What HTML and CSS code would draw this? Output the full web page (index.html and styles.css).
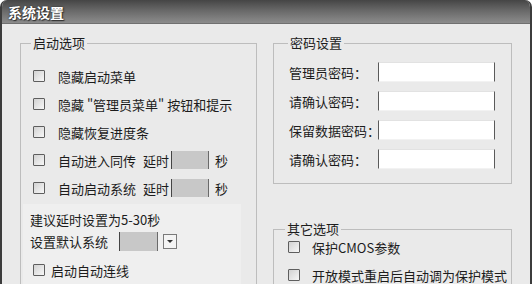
FILE: index.html
```html
<!DOCTYPE html>
<html lang="zh-CN">
<head>
<meta charset="utf-8">
<title>系统设置</title>
<link rel="stylesheet" href="styles.css">
</head>
<body>
<div class="window">
  <div class="titlebar"><span class="title">系统设置</span></div>
  <div class="content">
    <fieldset class="group group-start">
      <legend>启动选项</legend>
      <div class="rows">
        <div class="row"><span class="cb"></span><span>隐藏启动菜单</span></div>
        <div class="row"><span class="cb"></span><span>隐藏 "管理员菜单" 按钮和提示</span></div>
        <div class="row"><span class="cb"></span><span>隐藏恢复进度条</span></div>
        <div class="row"><span class="cb"></span><span>自动进入同传</span><span class="delay">延时</span><span class="field"></span><span class="unit">秒</span></div>
        <div class="row"><span class="cb"></span><span>自动启动系统</span><span class="delay">延时</span><span class="field"></span><span class="unit">秒</span></div>
      </div>
      <div class="panel">
        <div class="hint">建议延时设置为5-30秒</div>
        <div class="select-row"><span>设置默认系统</span><span class="field sel"></span><span class="drop"><span class="tri"></span></span></div>
        <div class="row row-auto"><span class="cb"></span><span>启动自动连线</span></div>
      </div>
    </fieldset>
    <div class="col-right">
      <fieldset class="group group-pass">
        <legend>密码设置</legend>
        <div class="pass-grid">
          <span>管理员密码：</span><span class="input"></span>
          <span>请确认密码：</span><span class="input"></span>
          <span>保留数据密码：</span><span class="input"></span>
          <span>请确认密码：</span><span class="input"></span>
        </div>
      </fieldset>
      <fieldset class="group group-other">
        <legend>其它选项</legend>
        <div class="other-rows">
          <div class="row row-o"><span class="cb"></span><span>保护CMOS参数</span></div>
          <div class="row row-o"><span class="cb"></span><span>开放模式重启后自动调为保护模式</span></div>
        </div>
      </fieldset>
    </div>
  </div>
</div>
</body>
</html>
```

FILE: styles.css
```css
html, body {
  margin: 0;
  background: #ffffff;
}
body {
  font-family: "Noto Sans CJK SC", "Noto Sans", sans-serif;
  font-size: 13px;
  color: #1c1c1c;
}
.window {
  width: 528px;
  height: 284px;
  border-left: 2px solid #3c3c3c;
  border-right: 2px solid #3c3c3c;
  border-radius: 7px 7px 0 0;
  background: #eaeaea;
  overflow: hidden;
}
.titlebar {
  height: 24px;
  box-sizing: border-box;
  border-bottom: 1px solid #707070;
  background: linear-gradient(#454545, #686868 45%, #8c8c8c);
  display: flex;
  align-items: center;
  padding-left: 6px;
}
.title {
  color: #ffffff;
  font-weight: bold;
  font-size: 14px;
  line-height: 1;
  text-shadow: 0 0 2px #222222, 1px 1px 1px #333333;
}
.content {
  display: flex;
  align-items: flex-start;
  gap: 16px;
  padding: 11px 0 0 18px;
}
fieldset.group {
  margin: 0;
  padding: 0;
  min-width: 0;
  border: 1px solid #bdbdbd;
  box-sizing: border-box;
}
legend {
  padding: 0 2px;
  line-height: 16px;
  font-size: 13px;
}
fieldset.group-start {
  width: 237px;
  height: 320px;
}
.group-start legend {
  margin-left: 10px;
}
.rows {
  padding: 11px 0 0 12px;
}
.row {
  display: flex;
  align-items: center;
  height: 28px;
  white-space: nowrap;
}
.cb {
  flex: none;
  width: 12px;
  height: 12px;
  box-sizing: border-box;
  border: 1px solid #5e5e5e;
  border-radius: 1px;
  background: linear-gradient(135deg, #d2d2d2, #f7f7f7);
  margin-right: 13px;
}
.delay {
  margin-left: 7px;
  margin-right: 2px;
}
.field {
  flex: none;
  width: 38px;
  height: 18px;
  box-sizing: border-box;
  background: #c8c8c8;
  border-left: 1px solid #454545;
  border-right: 1px solid #6a6a6a;
}
.unit {
  margin-left: 6px;
}
.panel {
  margin: 2px 15px 0 2px;
  background: #efefef;
  padding: 7px 0 0 7px;
  height: 110px;
}
.hint {
  line-height: 18px;
}
.select-row {
  display: flex;
  align-items: center;
  height: 22px;
  margin-top: 1px;
}
.field.sel {
  width: 39px;
  height: 19px;
  margin-left: 11px;
}
.drop {
  flex: none;
  width: 14px;
  height: 15px;
  box-sizing: border-box;
  margin-left: 5px;
  border: 1px solid #7a7a7a;
  background: #f4f4f4;
  display: flex;
  align-items: center;
  justify-content: center;
}
.tri {
  width: 0;
  height: 0;
  border-left: 3px solid transparent;
  border-right: 3px solid transparent;
  border-top: 3px solid #333333;
}
.row-auto {
  margin: 4px 0 0 3px;
}
.row-auto .cb {
  margin-right: 6px;
}
.col-right {
  width: 239px;
  display: flex;
  flex-direction: column;
}
fieldset.group-pass {
  height: 149px;
}
.group-pass legend {
  margin-left: 14px;
}
.pass-grid {
  display: grid;
  grid-template-columns: 89px 117px;
  grid-auto-rows: 20px;
  row-gap: 9px;
  align-items: center;
  padding: 11px 0 0 15px;
  white-space: nowrap;
}
.input {
  height: 20px;
  box-sizing: border-box;
  background: #ffffff;
  border-left: 1px solid #5a5a5a;
  border-right: 1px solid #5a5a5a;
  border-top: 1px solid #e2e2e2;
  border-bottom: 1px solid #f2f2f2;
}
fieldset.group-other {
  margin-top: 37px;
  height: 100px;
}
.group-other legend {
  margin-left: 11px;
}
.other-rows {
  display: flex;
  flex-direction: column;
  gap: 4px;
  margin-top: -2px;
  padding-left: 14px;
}
.row-o {
  height: 24px;
}
.row-o .cb {
  margin-right: 12px;
}
```
